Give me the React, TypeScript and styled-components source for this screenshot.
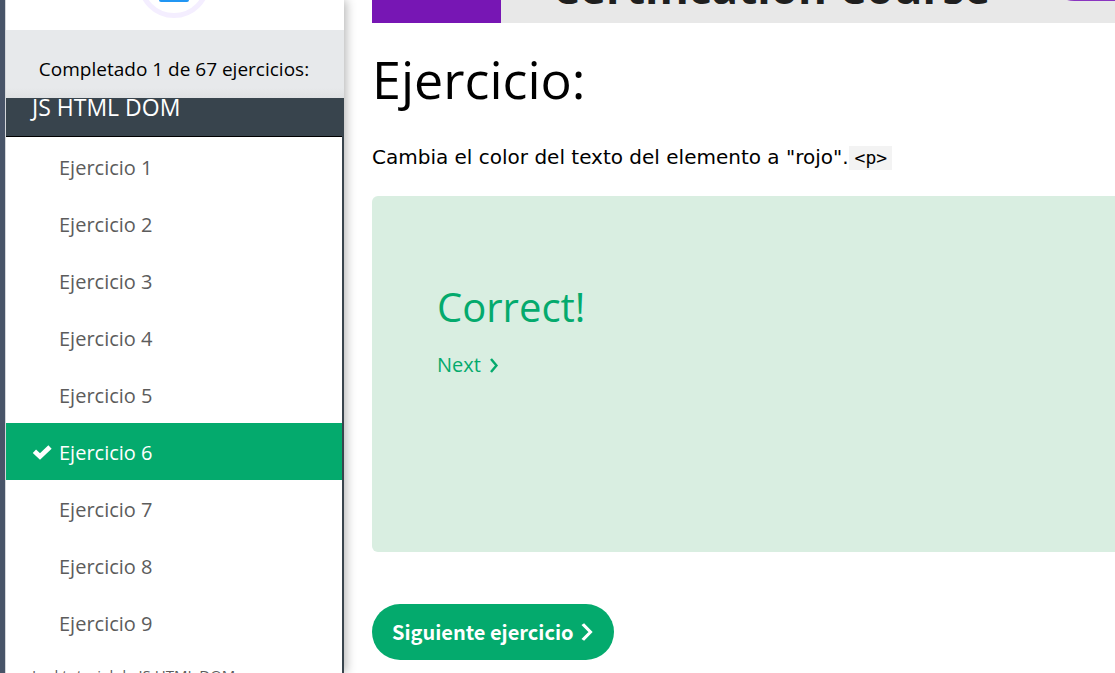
import React from "react";
import styled, { createGlobalStyle } from "styled-components";

const green = "#04aa6d";
const slate = "#38444d";
const ui = `"Open Sans", "Noto Sans", sans-serif`;
const body = `"DejaVu Sans", sans-serif`;
const brand = `"Noto Sans CJK SC", "Open Sans", sans-serif`;

const GlobalStyle = createGlobalStyle`
  * { box-sizing: border-box; }
  body { margin: 0; background: #fff; color: #000; font-family: ${ui}; }
`;

const Page = styled.div`
  display: flex;
  height: 100vh;
  overflow: hidden;
  border-left: 5px solid #485468;
`;

const Sidebar = styled.aside`
  display: flex;
  flex-direction: column;
  flex: 0 0 339px;
  border-left: 1px solid #d4d6da;
  box-shadow: 2px 0 10px rgba(0, 0, 0, 0.3);
`;

const BadgeArea = styled.div`
  display: flex;
  flex-direction: column;
  justify-content: flex-end;
  align-items: center;
  flex: 0 0 30px;
  padding: 0 2px 12px 0;
  overflow: hidden;
  svg { flex: none; }
`;

const Progress = styled.div`
  flex: none;
  padding: 29px 18px 19px 16px;
  background: linear-gradient(#e7e9eb 85%, #dfe1e3);
  font-size: 19px;
  line-height: 20px;
  text-align: center;
  white-space: nowrap;
`;

const Menu = styled.nav`
  flex: 1;
  min-height: 0;
  overflow: hidden;
  border-right: 2px solid ${slate};
`;

const MenuTitle = styled.h2`
  margin: 0 -2px 0 0;
  padding: 0 26px 20px;
  background: ${slate};
  border-bottom: 1px solid #000;
  color: #fff;
  font-size: 23px;
  font-weight: 400;
  line-height: 18px;
  white-space: nowrap;
`;

const MenuList = styled.ul`
  margin: 0;
  padding: 1px 0 0;
  list-style: none;
`;

const MenuLink = styled.a<{ $active?: boolean }>`
  display: grid;
  grid-template-columns: 27px 1fr;
  align-items: center;
  height: 57px;
  padding: 1px 26px 0;
  background: ${(p) => (p.$active ? green : "transparent")};
  color: ${(p) => (p.$active ? "#fff" : "#5c5c5c")};
  font-size: 20px;
  text-decoration: none;
  span { grid-column: 2; }
`;

const TutorialLink = styled.a`
  display: block;
  padding: 14px 26px;
  color: #5c5c5c;
  font-size: 15px;
  line-height: 20px;
  text-decoration: none;
`;

const Main = styled.main`
  flex: 1;
  min-width: 0;
  padding-left: 28px;
`;

const Banner = styled.a`
  display: grid;
  grid-template-columns: 129px 1fr;
  height: 23px;
  overflow: hidden;
  background: #e8e8e8;
  color: #1f1f1f;
  text-decoration: none;
`;

const BannerMark = styled.span`
  background: #7716b4;
`;

const BannerBody = styled.span`
  display: flex;
  justify-content: space-between;
  align-items: flex-end;
  height: 23px;
  padding-left: 51px;
`;

const BannerText = styled.span`
  flex: none;
  padding-bottom: 12px;
  font: 700 44px/48px ${ui};
  white-space: nowrap;
`;

const BannerCta = styled.span`
  flex: none;
  width: 66px;
  height: 50px;
  margin-bottom: 22px;
  background: #8a35c0;
  border-radius: 25px 0 0 25px;
`;

const Title = styled.h1`
  margin: 21px 0 0;
  font-size: 52px;
  font-weight: 400;
  line-height: 70px;
`;

const Task = styled.p`
  margin: 28px 0 0;
  font: 20px/30px ${body};
`;

const Code = styled.code`
  display: inline-block;
  padding: 0 5px 0 6px;
  background: #f3f3f3;
  font: 18px/24px "DejaVu Sans Mono", monospace;
`;

const Result = styled.section`
  height: 356px;
  margin-top: 24px;
  padding: 81px 65px;
  background: #d9eee1;
  border-radius: 6px 0 0 6px;
  color: ${green};
`;

const ResultTitle = styled.h2`
  margin: 0;
  font-size: 40px;
  font-weight: 400;
  line-height: 60px;
`;

const NextLink = styled.a`
  display: inline-flex;
  align-items: center;
  gap: 8px;
  margin-top: 13px;
  color: ${green};
  font-size: 20px;
  line-height: 30px;
  text-decoration: none;
`;

const NextButton = styled.button`
  display: flex;
  align-items: center;
  gap: 6px;
  height: 56px;
  margin-top: 52px;
  padding: 0 20px;
  border: 0;
  border-radius: 28px;
  background: ${green};
  color: #fff;
  font: 700 20px/30px ${brand};
`;

const Chevron = ({ w, h, stroke }: { w: number; h: number; stroke: number }) => (
  <svg width={w} height={h} viewBox="0 0 10 16" preserveAspectRatio="none" aria-hidden="true">
    <path d="M2 1 L7.5 8 L2 15" fill="none" stroke="currentColor" strokeWidth={stroke} />
  </svg>
);

const Check = () => (
  <svg width="20" height="16" viewBox="0 0 20 16" aria-hidden="true">
    <path d="M2.4 7.2 L8 12.4 L18 3" fill="none" stroke="currentColor" strokeWidth="4.8" />
  </svg>
);

const exercises = [1, 2, 3, 4, 5, 6, 7, 8, 9];
const current = 6;

export default function App() {
  return (
    <>
      <GlobalStyle />
      <Page>
        <Sidebar>
          <BadgeArea>
            <svg width="72" height="72" viewBox="0 0 72 72" aria-hidden="true">
              <circle cx="36" cy="36" r="33.5" fill="#fff" stroke="#f4eeff" strokeWidth="5" />
              <rect x="21" y="30" width="30" height="26" rx="2" fill="#2196f3" />
            </svg>
          </BadgeArea>
          <Progress>Completado 1 de 67 ejercicios:</Progress>
          <Menu>
            <MenuTitle>JS HTML DOM</MenuTitle>
            <MenuList>
              {exercises.map((n) => (
                <li key={n}>
                  <MenuLink href="#" $active={n === current}>
                    {n === current && <Check />}
                    <span>Ejercicio {n}</span>
                  </MenuLink>
                </li>
              ))}
            </MenuList>
            <TutorialLink href="#">Ir al tutorial de JS HTML DOM</TutorialLink>
          </Menu>
        </Sidebar>
        <Main>
          <Banner href="#">
            <BannerMark />
            <BannerBody>
              <BannerText>Certification Course</BannerText>
              <BannerCta />
            </BannerBody>
          </Banner>
          <Title>Ejercicio:</Title>
          <Task>
            Cambia el color del texto del elemento a "rojo".
            <Code>&lt;p&gt;</Code>
          </Task>
          <Result>
            <ResultTitle>Correct!</ResultTitle>
            <NextLink href="#">
              Next <Chevron w={10} h={15} stroke={2.4} />
            </NextLink>
          </Result>
          <NextButton type="button">
            Siguiente ejercicio <Chevron w={14} h={18} stroke={2.4} />
          </NextButton>
        </Main>
      </Page>
    </>
  );
}
